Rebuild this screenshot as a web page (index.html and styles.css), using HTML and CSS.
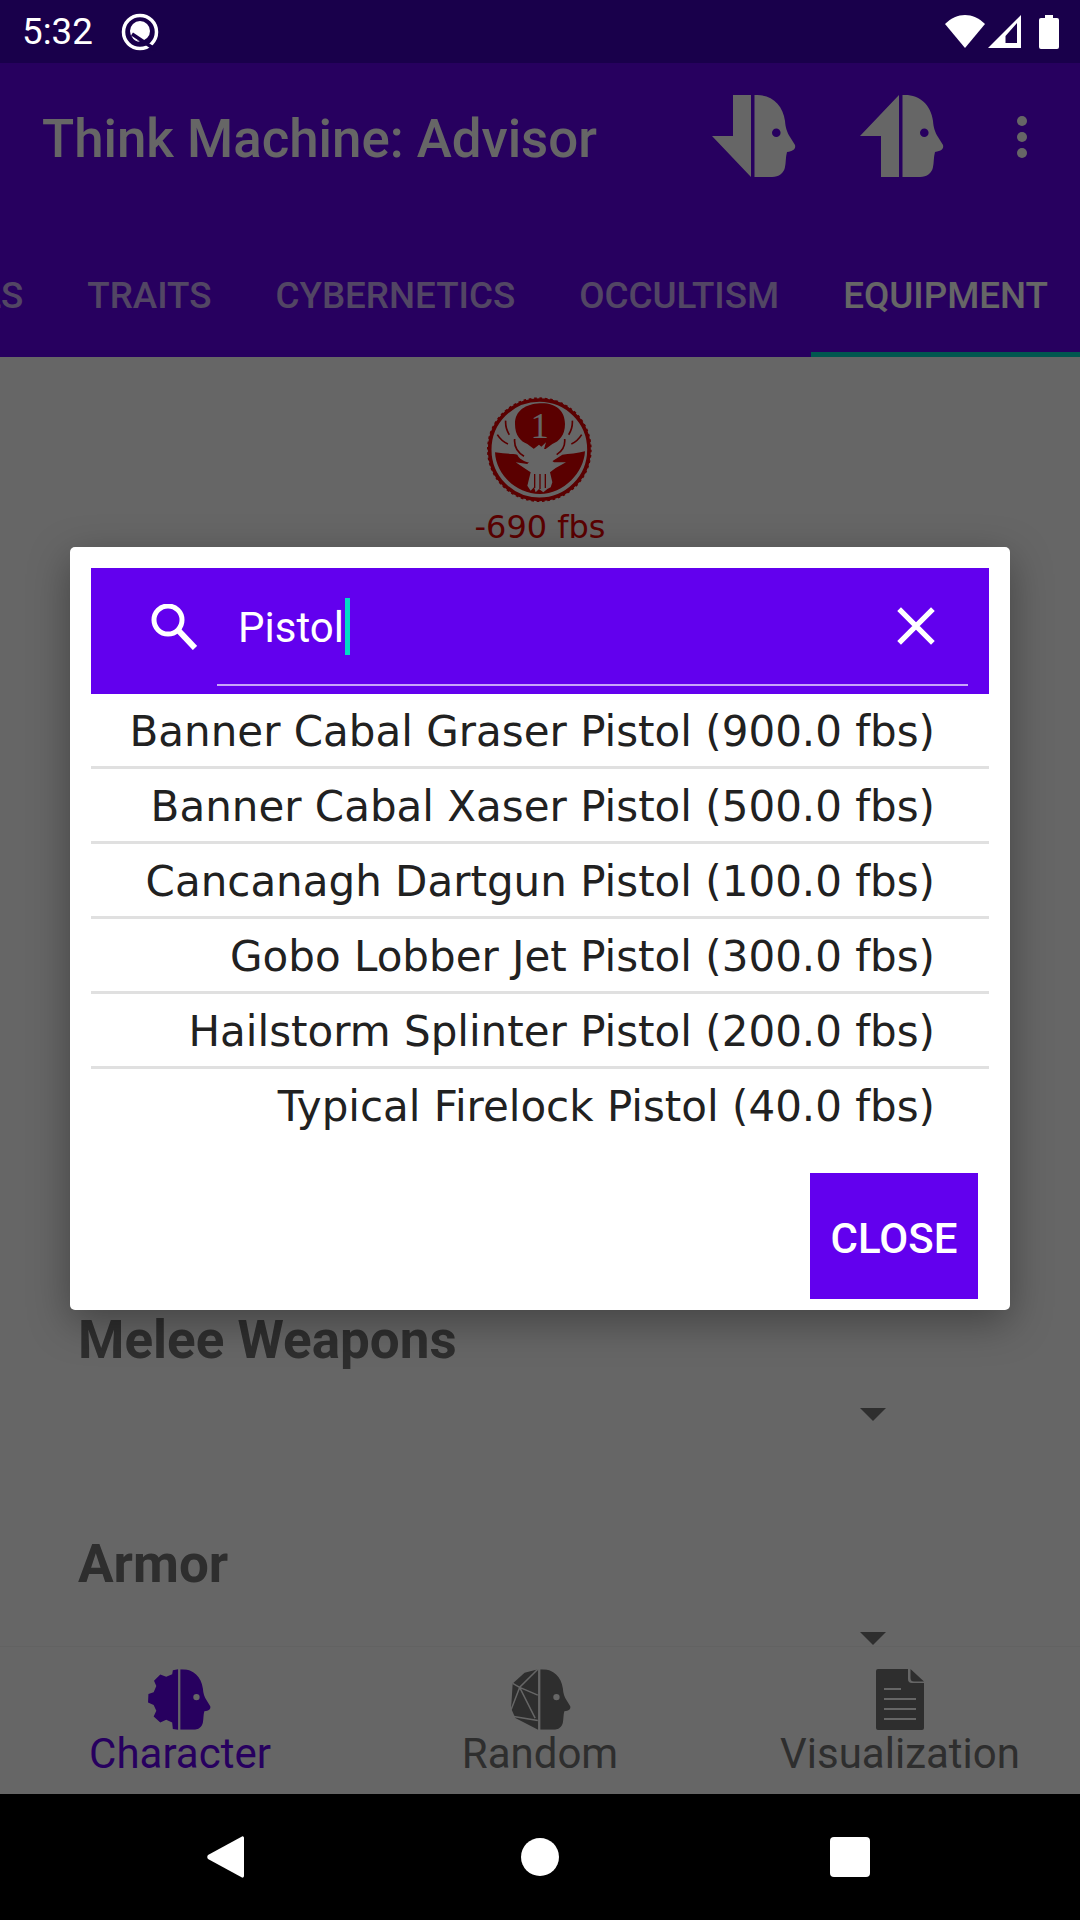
FILE: index.html
```html
<!DOCTYPE html>
<html lang="en">
<head>
  <meta charset="UTF-8">
  <title>Think Machine: Advisor</title>
  <link rel="stylesheet" href="styles.css">
</head>
<body>

  <svg class="defs" width="0" height="0">
    <symbol id="rosto" viewBox="0 0 84 82">
      <path d="M42.5 0 H45 C60 0 71 10 73 26 C73.5 33 75 37 78 42 L83 50 C84 54 81 56 75 57 C73.5 62 74 68 73 72 C72 78 67 82 60 82 H42.5 Z M64.3 33.4 A4.3 4.3 0 1 0 64.3 42 A4.3 4.3 0 1 0 64.3 33.4 Z" fill-rule="evenodd"/>
    </symbol>
  </svg>

  <div class="status-bar">
    <div class="status-left">
      <span class="hora">5:32</span>
      <svg class="icon-q" viewBox="0 0 38 38">
        <circle cx="19" cy="19" r="16.500" fill="none" stroke="#fff" stroke-width="3.500"/>
        <circle cx="19" cy="18" r="10" fill="#fff"/>
        <path d="M11 21 L35 37" stroke="#19004b" stroke-width="3.500" fill="none"/>
        <path d="M11 24 L19 29 A10 10 0 0 1 11 24 Z" fill="#fff"/>
      </svg>
    </div>
    <div class="status-right">
      <svg class="icon-wifi" viewBox="0 0 40 33"><path d="M20 33 L0 9 C12 -3 28 -3 40 9 Z" fill="#fff"/></svg>
      <svg class="icon-sinal" viewBox="0 0 33 33"><path d="M33 0 V33 H0 Z M29 8 L17.500 21 V28 H29 Z" fill="#fff" fill-rule="evenodd"/></svg>
      <svg class="icon-bateria" viewBox="0 0 20 34"><path d="M6 0 H14 V3 H18 A2 2 0 0 1 20 5 V32 A2 2 0 0 1 18 34 H2 A2 2 0 0 1 0 32 V5 A2 2 0 0 1 2 3 H6 Z" fill="#fff"/></svg>
    </div>
  </div>

  <div class="tela">
    <div class="app-bar">
      <div class="toolbar">
        <h1 class="titulo">Think Machine: Advisor</h1>
        <svg class="icon-rosto" viewBox="0 0 84 82">
          <path d="M21 0 H39 V82 L0 41 H21 Z"/>
          <use href="#rosto" width="84" height="82"/>
        </svg>
        <svg class="icon-rosto segundo" viewBox="0 0 84 82">
          <path d="M21 82 V41 H0 L39 0 V82 Z"/>
          <use href="#rosto" width="84" height="82"/>
        </svg>
        <svg class="icon-menu" viewBox="0 0 10 42">
          <circle cx="5" cy="5" r="5"/>
          <circle cx="5" cy="21" r="5"/>
          <circle cx="5" cy="37" r="5"/>
        </svg>
      </div>
      <div class="abas">
        <span class="aba">Skills</span>
        <span class="aba">Traits</span>
        <span class="aba">Cybernetics</span>
        <span class="aba">Occultism</span>
        <span class="aba ativa">Equipment</span>
      </div>
    </div>

    <div class="conteudo">
      <div class="medalha">
        <svg class="logo" viewBox="0 0 336 336">
          <circle cx="166" cy="167" r="152" fill="none" stroke="#e00000" stroke-width="10" stroke-dasharray="8 7.900"/>
          <circle cx="166" cy="167" r="149" fill="none" stroke="#e00000" stroke-width="11"/>
          <path d="M33 175 C60 180 85 178 100 182 C105 195 120 200 130 205 L200 205 L235 182 C255 180 280 178 303 172 C300 235 240 300 168 300 C95 300 36 240 33 175 Z" fill="#e00000"/>
          <path d="M168 28 C215 26 243 50 243 90 C243 125 225 142 205 150 L185 165 L150 165 L130 150 C110 142 93 125 93 90 C93 50 125 30 168 28 Z" fill="#e00000"/>
          <text class="logo-num" x="167" y="131" text-anchor="middle">1</text>
          <path d="M145 168 L165 152 L172 158 L186 145 L180 166 L190 190 L210 205 L246 205 L215 222 L198 235 L205 265 L200 280 L190 285 L178 295 L165 285 L155 295 L150 280 L140 290 L130 275 L140 235 L125 225 L95 205 L130 210 L150 185 Z" fill="#fff"/>
          <path d="M152 240 V282 M168 240 V285 M184 240 V282" stroke="#e00000" stroke-width="4" fill="none"/>
          <path d="M65 80 C64 95 68 110 76 122 M40 122 C48 135 60 145 72 150 M92 135 C90 155 100 175 120 187 M265 80 C266 95 262 110 254 122 M293 122 C285 135 274 145 262 150 M242 135 C244 155 234 172 218 182" stroke="#e00000" stroke-width="5" fill="none"/>
        </svg>
        <span class="saldo">-690 fbs</span>
      </div>

      <section class="secao primeira">
        <h2 class="secao-titulo">Melee Weapons</h2>
        <div class="seletor"><span class="seta"></span></div>
      </section>
      <section class="secao">
        <h2 class="secao-titulo">Armor</h2>
        <div class="seletor"><span class="seta"></span></div>
      </section>
    </div>

    <nav class="nav-inferior">
      <div class="nav-item ativo">
        <svg class="nav-icone" viewBox="0 0 84 82">
          <path d="M39.400 0 L32.300 1.300 L31.400 6.700 L23.300 10.300 L15.300 7.200 L6.800 15.700 L9.900 22.800 L6.300 31.300 L-0.800 33.600 L-1.300 45.200 L6.300 48.300 L9.900 56.400 L6.300 64 L15.300 72 L23.300 68.500 L31.400 72 L32.300 81 L39.400 82 Z"/>
          <use href="#rosto" width="84" height="82"/>
        </svg>
        <span>Character</span>
      </div>
      <div class="nav-item">
        <svg class="nav-icone" viewBox="0 0 84 82">
          <path d="M39.400 0 L21.100 4.900 L5 19.200 L2.800 52.800 L8.600 66.200 L39.400 82 Z"/>
          <path class="facetas" d="M39 0 L14.400 24.600 L5 19.200 M14.400 24.600 L39 35 M14.400 24.600 L35.400 66.200 M14.400 24.600 L2.800 55 M6.400 64 L39 69.400"/>
          <use href="#rosto" width="84" height="82"/>
        </svg>
        <span>Random</span>
      </div>
      <div class="nav-item">
        <svg class="nav-icone" viewBox="0 0 48 61">
          <path d="M2 0 H32 V10 A4 4 0 0 0 36 14 H48 V59 A2 2 0 0 1 46 61 H2 A2 2 0 0 1 0 59 V2 A2 2 0 0 1 2 0 Z"/>
          <path d="M34.500 0 L48 12.500 H38 A3.500 3.500 0 0 1 34.500 9 Z"/>
          <path class="facetas" d="M8 20 H25 M8 30 H40 M8 40 H40 M8 50 H40"/>
        </svg>
        <span>Visualization</span>
      </div>
    </nav>

    <!-- fundo escuro do dialogo -->
    <div class="scrim">
      <div class="dialogo">
        <div class="busca">
          <svg class="icon-busca" viewBox="0 0 46 46">
            <circle cx="17" cy="16" r="14" fill="none" stroke="#fff" stroke-width="5"/>
            <path d="M27 26 L44 44" stroke="#fff" stroke-width="6" fill="none"/>
          </svg>
          <div class="busca-campo">
            <span class="busca-texto">Pistol</span>
            <span class="cursor"></span>
            <svg class="icon-fechar" viewBox="0 0 36 36">
              <path d="M2 2 L34 34 M34 2 L2 34" stroke="#fff" stroke-width="5" fill="none"/>
            </svg>
          </div>
        </div>
        <ul class="lista">
          <li>Banner Cabal Graser Pistol (900.0 fbs)</li>
          <li>Banner Cabal Xaser Pistol (500.0 fbs)</li>
          <li>Cancanagh Dartgun Pistol (100.0 fbs)</li>
          <li>Gobo Lobber Jet Pistol (300.0 fbs)</li>
          <li>Hailstorm Splinter Pistol (200.0 fbs)</li>
          <li>Typical Firelock Pistol (40.0 fbs)</li>
        </ul>
        <div class="acoes">
          <button class="botao-fechar">Close</button>
        </div>
      </div>
    </div>
  </div>

  <div class="nav-sistema">
    <svg class="icon-voltar" viewBox="0 0 37 42"><path d="M35 0.500 C36 0 37 1 37 2 V40 C37 41 36 42 35 41.500 L1 23 C0 22 0 20 1 19 Z" fill="#fff"/></svg>
    <span class="icon-home"></span>
    <span class="icon-recentes"></span>
  </div>

</body>
</html>
```

FILE: styles.css
```css
* {
  box-sizing: border-box;
}

body {
  display: flex;
  flex-direction: column;
  width: 1080px;
  height: 1920px;
  margin: 0;
  overflow: hidden;
  background-color: #000;
  font-family: 'Roboto', sans-serif;
}

.defs {
  position: absolute;
}

/* barra de status */
.status-bar {
  display: flex;
  justify-content: space-between;
  align-items: center;
  height: 63px;
  padding: 0 21px 0 22px;
  background-color: #19004b;
  color: white;
}

.status-left,
.status-right {
  display: flex;
  align-items: center;
}

.hora {
  font-size: 36.75px;
}

.icon-q {
  width: 38px;
  height: 38px;
  margin-left: 28px;
}

.icon-wifi {
  width: 40px;
  height: 33px;
}

.icon-sinal {
  width: 33px;
  height: 33px;
  margin-left: 3px;
}

.icon-bateria {
  width: 20px;
  height: 34px;
  margin-left: 18px;
}

/* area do app, escurecida pelo scrim */
.tela {
  position: relative;
  display: flex;
  flex-direction: column;
  height: 1731px;
  background-color: white;
}

.app-bar {
  height: 294px;
  background-color: #6200ee;
  color: white;
}

.toolbar {
  display: flex;
  align-items: center;
  height: 147px;
  padding-left: 42px;
}

.titulo {
  flex: 1;
  margin: 0;
  padding-top: 5px;
  font-size: 52.8px;
  font-weight: 500;
}

.icon-rosto {
  width: 84px;
  height: 82px;
  margin-bottom: 2px;
  fill: white;
}

.segundo {
  margin-left: 64px;
}

.icon-menu {
  width: 10px;
  height: 42px;
  margin: 0 53px 0 73px;
  fill: white;
}

.abas {
  display: flex;
  justify-content: flex-end;
  height: 126px;
  margin-top: 21px;
  overflow: hidden;
}

.aba {
  display: flex;
  flex-shrink: 0;
  align-items: center;
  padding: 2px 32px 0;
  font-size: 36.75px;
  font-weight: 500;
  text-transform: uppercase;
  color: rgba(255, 255, 255, 0.7);
}

.ativa {
  box-shadow: inset 0 -5px 0 #03dac5;
  color: white;
}

.conteudo {
  flex: 1;
  overflow: hidden;
  color: #737373;
}

.medalha {
  display: flex;
  flex-direction: column;
  align-items: center;
  padding-top: 37px;
}

.logo {
  width: 112px;
  height: 112px;
}

.logo-num {
  font-family: 'Liberation Serif', serif;
  font-size: 110px;
  fill: white;
}

.saldo {
  margin-top: 2px;
  font-family: 'DejaVu Sans', sans-serif;
  font-size: 32px;
  color: #e00000;
}

.primeira {
  margin-top: 763px;
}

.secao {
  height: 224px;
  padding-left: 78px;
}

.secao-titulo {
  margin: 0;
  font-size: 53px;
  font-weight: 700;
  color: #737373;
}

.seletor {
  display: flex;
  justify-content: flex-end;
  padding: 37px 194px 0 0;
}

.seta {
  width: 0;
  height: 0;
  border-left: 13px solid transparent;
  border-right: 13px solid transparent;
  border-top: 13px solid #737373;
}

.nav-inferior {
  display: grid;
  grid-template-columns: repeat(3, 1fr);
  height: 148px;
  border-top: 1px solid #f4f4f4;
  background-color: white;
}

.nav-item {
  display: flex;
  flex-direction: column;
  align-items: center;
  padding-top: 22px;
  font-size: 42px;
  line-height: 48px;
  color: #737373;
}

.nav-item .nav-icone {
  height: 61px;
  fill: #737373;
}

.nav-item:nth-child(-n+2) .nav-icone {
  width: 62px;
}

.nav-item:nth-child(3) .nav-icone {
  width: 48px;
}

.ativo {
  color: #6200ee;
}

.ativo .nav-icone {
  fill: #6200ee;
}

.nav-icone {
  overflow: visible;
}

.facetas {
  fill: none;
  stroke: white;
  stroke-width: 2;
}

/* dialogo de busca */
.scrim {
  position: absolute;
  inset: 0;
  display: flex;
  align-items: center;
  justify-content: center;
  background-color: rgba(0, 0, 0, 0.6);
}

.dialogo {
  width: 940px;
  padding: 21px 21px 11px;
  border-radius: 5px;
  background-color: white;
  box-shadow: 0 12px 40px rgba(0, 0, 0, 0.35);
}

.busca {
  display: flex;
  height: 126px;
  padding: 0 21px 8px 60px;
  background-color: #6200ee;
}

.icon-busca {
  width: 46px;
  height: 46px;
  align-self: center;
}

.busca-campo {
  display: flex;
  flex: 1;
  align-items: center;
  margin-left: 20px;
  padding-left: 21px;
  border-bottom: 2px solid rgba(255, 255, 255, 0.65);
}

.busca-texto {
  padding-top: 2px;
  font-size: 42px;
  color: white;
}

.cursor {
  width: 5px;
  height: 57px;
  margin-left: 1px;
  background-color: #03dac5;
}

.icon-fechar {
  width: 38px;
  height: 38px;
  margin-left: auto;
  margin-right: 33px;
}

.lista {
  margin: 0;
  padding: 0;
  list-style: none;
}

.lista li {
  height: 75px;
  padding: 3px 54px 0 0;
  border-bottom: 3px solid #e0e0e0;
  font-family: 'DejaVu Sans', sans-serif;
  font-size: 42px;
  line-height: 69px;
  text-align: right;
  color: #212121;
}

.lista li:last-child {
  border-bottom: none;
}

.acoes {
  display: flex;
  justify-content: flex-end;
  margin-top: 29px;
  padding-right: 11px;
}

.botao-fechar {
  width: 168px;
  height: 126px;
  padding: 4px 0 0;
  border: none;
  background-color: #6200ee;
  font-family: 'Roboto', sans-serif;
  font-size: 42px;
  font-weight: 500;
  text-transform: uppercase;
  color: white;
}

/* barra de navegacao do sistema */
.nav-sistema {
  flex: 1;
  display: flex;
  align-items: center;
  background-color: #000;
}

.icon-voltar {
  width: 37px;
  height: 42px;
  margin-left: 207px;
}

.icon-home {
  width: 38px;
  height: 38px;
  margin-left: 277px;
  border-radius: 50%;
  background-color: white;
}

.icon-recentes {
  width: 40px;
  height: 40px;
  margin-left: 271px;
  border-radius: 4px;
  background-color: white;
}
```
